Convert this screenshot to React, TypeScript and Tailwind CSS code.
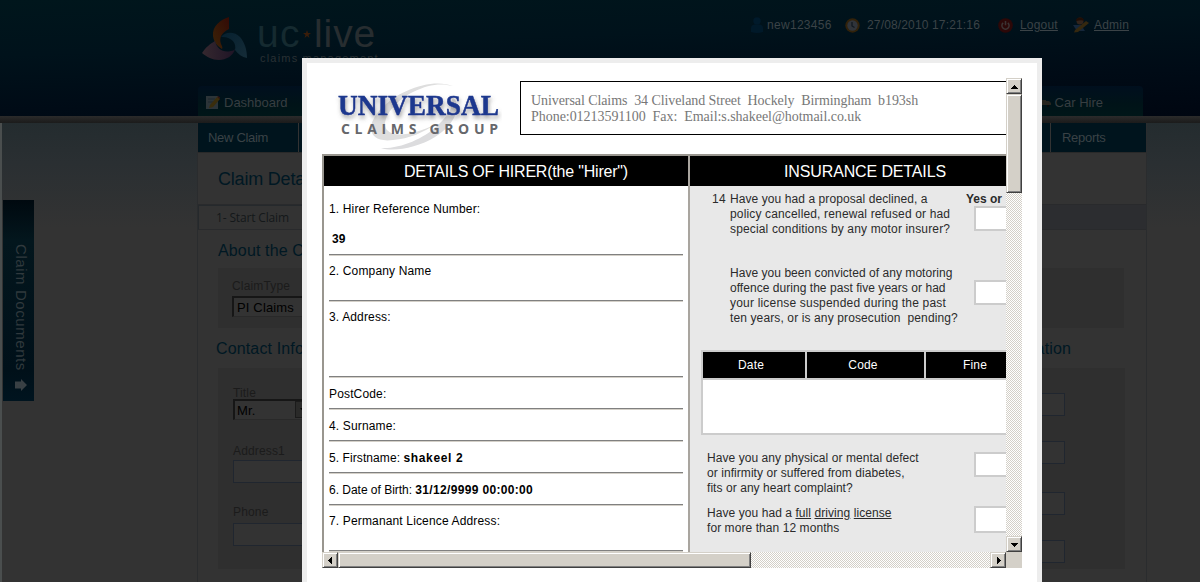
import type { ReactNode } from "react";

function BrandMark() {
  return (
    <svg className="mt-[17px] h-11 w-[46px] shrink-0" viewBox="0 0 46 44">
      <defs>
        <linearGradient id="flame" x1="0" y1="1" x2="1" y2="0">
          <stop offset="0" stopColor="#3b2408" />
          <stop offset="1" stopColor="#330a05" />
        </linearGradient>
        <linearGradient id="petal" x1="0" y1="0" x2="1" y2="0">
          <stop offset="0" stopColor="#35282f" />
          <stop offset="1" stopColor="#1f1426" />
        </linearGradient>
        <linearGradient id="wave" x1="0" y1="0" x2="1" y2="1">
          <stop offset="0" stopColor="#06202f" />
          <stop offset="1" stopColor="#152c38" />
        </linearGradient>
      </defs>
      <path d="M27 0C18 3 10 9 11 19c1 6 4 10 9 13 1-1 0-3-1-5-2-6 0-11 8-15z" fill="url(#flame)" />
      <path d="M0 36C4 30 8 27 13 24c2 8 8 12 16 10 2 0 3-1 4-2-2 7-9 11-16 11C10 43 5 40 0 36z" fill="url(#petal)" />
      <path d="M19 20c5-6 14-5 19 0 5 6 7 13 7 21-5-1-9-4-12-8 2-7-4-14-14-13z" fill="url(#wave)" />
    </svg>
  );
}

function UserIcon() {
  return (
    <svg className="h-4 w-3 shrink-0" viewBox="0 0 12 16">
      <circle cx="6" cy="4" r="3.7" fill="#001a2b" />
      <path d="M0 15V11Q0 7.500 4 7.500H8Q12 7.500 12 11V15Q6 17 0 15Z" fill="#001929" />
    </svg>
  );
}

function ClockIcon() {
  return (
    <svg className="h-[15px] w-[15px] shrink-0" viewBox="0 0 15 15">
      <circle cx="7.500" cy="7.500" r="7.200" fill="#32220a" />
      <circle cx="7.500" cy="7.500" r="5.200" fill="#30343a" />
      <path d="M7 4V8L9.500 9.500" stroke="#101820" strokeWidth="1.300" fill="none" />
    </svg>
  );
}

function PowerIcon() {
  return (
    <svg className="h-[15px] w-[15px] shrink-0" viewBox="0 0 15 15">
      <circle cx="7.500" cy="7.500" r="7.300" fill="#2c0808" />
      <path d="M5.200 4.800A3.600 3.600 0 1 0 9.800 4.800M7.500 3V7.200" stroke="#3c3434" strokeWidth="1.500" fill="none" />
    </svg>
  );
}

function AdminIcon() {
  return (
    <svg className="h-4 w-4 shrink-0" viewBox="0 0 16 16">
      <circle cx="7" cy="4" r="3.500" fill="#32241c" />
      <path d="M3 4Q3 .5 7 .5T11 4Q9 2.500 3 4Z" fill="#1f0d05" />
      <path d="M0 8H8L12 14H4Z" fill="#15263a" />
      <path d="M2 13L13 4L16 6L5 15L1 15.500Z" fill="#35280f" />
    </svg>
  );
}

function NoteIcon() {
  return (
    <svg className="h-4 w-4 shrink-0" viewBox="0 0 16 16">
      <path d="M1 1H13V14H1Z" fill="#2c3438" />
      <path d="M3 4H10M3 7H8" stroke="#1d272c" />
      <path d="M5 10L12 2L15 4L8 12L4 13Z" fill="#3a2d0c" />
      <path d="M12 2L13 1L15 2.500L15 4Z" fill="#351410" />
    </svg>
  );
}

function Logo() {
  return (
    <svg className="h-[72px] w-[172px] shrink-0" viewBox="0 0 172 72">
      <defs>
        <filter id="soft" x="-10%" y="-20%" width="120%" height="160%">
          <feDropShadow dx="1" dy="3" stdDeviation="2" floodColor="#555" floodOpacity="0.55" />
        </filter>
      </defs>
      <path d="M123 5C103-3 68 8 49 30C34 48 41 62 63 59C79 58 94 51 106 43C84 54 64 57 57 49C50 40 63 21 83 11C99 3 111 2 123 5Z" fill="#dedede" />
      <path d="M119 14C135 21 126 43 105 56C87 67 64 71 51 67C70 68 93 58 107 45C122 31 126 20 119 14Z" fill="#dcdcde" />
      <text x="8" y="34" textLength="161" lengthAdjust="spacingAndGlyphs" filter="url(#soft)" strokeWidth="0.5" className="fill-[#1b378e] stroke-[#1b378e] font-['Liberation_Serif'] text-[29px] font-bold">UNIVERSAL</text>
      <text x="11" y="53" textLength="157" className="fill-[#66676b] font-['Open_Sans'] text-[14px] font-bold">CLAIMS GROUP</text>
    </svg>
  );
}

function DarkInput({ className }: { className: string }) {
  return <div className={`border border-[#20262f] bg-[#333] ${className}`} />;
}

function Field({ className, children }: { className: string; children?: ReactNode }) {
  return (
    <div className={`shrink-0 whitespace-pre border-b border-[#808080] tracking-[0.15px] shadow-[0_1px_0_#d4d0c8] ${className}`}>
      {children}
    </div>
  );
}

function ScrollButton({ d }: { d: string }) {
  return (
    <div className="flex h-4 w-4 shrink-0 items-center justify-center border border-t-[#d4d0c8] border-r-[#404040] border-b-[#404040] border-l-[#d4d0c8] bg-[#d4d0c8] shadow-[inset_1px_1px_0_#fff,inset_-1px_-1px_0_#808080]">
      <svg className="h-[9px] w-[9px]" viewBox="0 0 9 9" shapeRendering="crispEdges">
        <path d={d} fill="#000" />
      </svg>
    </div>
  );
}

const thumb =
  "shrink-0 border border-t-[#d4d0c8] border-r-[#404040] border-b-[#404040] border-l-[#d4d0c8] bg-[#d4d0c8] shadow-[inset_1px_1px_0_#fff,inset_-1px_-1px_0_#808080]";
const track = "flex-1 bg-[repeating-conic-gradient(#d4d0c8_0_25%,#fff_0_50%)] bg-[length:2px_2px]";

function AnswerBox({ className }: { className: string }) {
  return <div className={`w-10 shrink-0 border-2 border-r-0 border-[#ccc] bg-white ${className}`} />;
}

function Backdrop() {
  return (
    <div className="flex h-full flex-col">
      <header className="flex h-[116px] shrink-0 flex-col bg-[linear-gradient(178deg,#00161c_0%,#00121b_35%,#000b16_70%,#000611_100%)]">
        <div className="flex h-[86px] items-start pl-[202px]">
          <BrandMark />
          <div className="ml-[9px] w-[131px] pt-[15px]">
            <div className="flex h-[37px] items-center text-[39px] leading-[38px] text-[#152a30]">
              <span className="tracking-[1.4px]">uc</span>
              <svg className="ml-[2px] mr-[3px] h-2 w-2" viewBox="0 0 8 8">
                <path d="M4 0L5 3H8L5.500 5L6.500 8L4 6L1.500 8L2.500 5L0 3H3Z" fill="#3a1d0a" />
              </svg>
              <span className="tracking-[0.9px] text-[#272d30]">live</span>
            </div>
            <div className="ml-[3px] whitespace-nowrap text-[11px] leading-3 tracking-[1.2px] text-[#293034]">claims management</div>
          </div>
          <div className="ml-[363px] mt-[17px] flex h-4 items-center whitespace-nowrap text-[12px] text-[#3b4347]">
            <UserIcon />
            <span className="ml-1 w-[78px] tracking-[0.3px]">new123456</span>
            <ClockIcon />
            <span className="ml-[7px] w-[131px] tracking-[0.15px]">27/08/2010 17:21:16</span>
            <PowerIcon />
            <span className="ml-[7px] w-[53px] tracking-[0.2px] underline underline-offset-1">Logout</span>
            <AdminIcon />
            <span className="ml-[5px] tracking-[0.2px] underline underline-offset-1">Admin</span>
          </div>
        </div>
        <nav className="ml-[198px] flex h-[30px] w-[945px] items-center justify-between rounded-t-[4px] bg-[linear-gradient(#000f1e,#001318_60%,#001618)] pl-[7px] pr-10 text-[13px] text-[#373e41]">
          <span className="flex items-center gap-[3px] pt-[3px]"><NoteIcon />Dashboard</span>
          <span className="flex items-center gap-[4px] pt-[3px]">
            <svg className="h-2 w-3" viewBox="0 0 12 8">
              <path d="M0 1H7V6H0ZM7 2H10L12 4V6H7Z" fill="#27251f" />
              <path d="M1 6H3V8H1ZM8 6H10V8H8Z" fill="#0a0c0c" />
            </svg>
            Car Hire
          </span>
        </nav>
      </header>
      <div className="h-[7px] shrink-0 bg-[linear-gradient(#2b2b2b,#1b1b1b)]" />
      <div className="flex min-h-0 flex-1 bg-[linear-gradient(#242c2f_0px,#2a2f32_40px,#333_105px)]">
        <div className="w-[197px] shrink-0 border-l-2 border-[#4a4e4e] pl-px pt-[77px]">
          <aside className="flex h-[201px] w-[31px] flex-col items-center bg-[linear-gradient(#00090f,#03161d_20%,#001019_85%,#00141f)] pl-[5px] pt-[44px]">
            <span className="h-[129px] text-[15px] leading-[18px] tracking-[0.57px] text-[#30393d] [writing-mode:vertical-rl]">Claim Documents</span>
            <svg className="mt-[6px] h-3 w-3 shrink-0" viewBox="0 0 12 12">
              <path d="M0 2.500H6V0L12 6L6 12V9.500H0Z" fill="#394044" />
            </svg>
          </aside>
        </div>
        <div className="flex w-[950px] shrink-0 flex-col border-x border-[#2a2c2e] bg-[#333]">
          <div className="flex h-[29px] shrink-0 items-center bg-[#00141d] text-[13px] text-[#3a4246]">
            <span className="flex h-full w-[101px] items-center border-r border-[#333] pl-[10px] tracking-[-0.3px]">New Claim</span>
            <span className="ml-auto flex h-full w-[96px] items-center border-l border-[#333] pl-[11px] tracking-[-0.3px]">Reports</span>
          </div>
          <div className="h-[52px] shrink-0 border-t border-[#292929] pl-5 pt-[13px] text-[18px] leading-[26px] tracking-[-0.2px] text-[#001823]">Claim Deta</div>
          <div className="flex h-[26px] shrink-0 items-end border-y border-[#292a2c] bg-[#2c2d30]">
            <span className="flex h-[24px] w-[120px] items-center border-l border-t border-[#25292c] bg-[#333] pl-[17px] font-['Open_Sans'] text-[12px] tracking-[-0.15px] text-[#14181a]">1- Start Claim</span>
          </div>
          <div className="h-[38px] shrink-0 pl-5 pt-[9px] text-[16px] leading-6 tracking-[0.14px] text-[#001823]">About the C</div>
          <div className="ml-5 mr-[22px] h-[60px] shrink-0 bg-[#2f2f2f] pl-[14px] pt-[11px] text-[12px] leading-[14px] tracking-[0.15px] text-[#1b1b1b]">
            <div>ClaimType</div>
            <div className="mt-[3px] h-[21px] w-[120px] border-2 border-b border-[#161616] border-b-[#292929] bg-[#333] pl-[3px] text-[13px] leading-[19px] text-[#000]">PI Claims</div>
          </div>
          <div className="flex h-[40px] shrink-0 justify-between pl-[18px] pr-[75px] pt-[9px] text-[16px] leading-6 tracking-[0.14px] text-[#001823]">
            <span>Contact Info</span>
            <span>ation</span>
          </div>
          <div className="ml-5 mr-[21px] flex h-[201px] shrink-0 justify-between bg-[#2f2f2f] pl-[15px] pr-[60px] text-[12px] leading-[14px] tracking-[0.15px] text-[#1b1b1b]">
            <div className="pt-[18px]">
              <div className="h-[13px]">Title</div>
              <div className="flex h-[21px] w-[82px] border-2 border-b border-[#161616] border-b-[#292929] bg-[#333] pl-[2px] text-[13px] leading-[19px] text-[#000]">
                <span className="w-[58px]">Mr.</span>
                <span className="flex h-[17px] w-4 items-center justify-center border border-[#1b1b1b] bg-[#2a2a29]">
                  <svg className="h-1 w-[7px]" viewBox="0 0 7 4"><path d="M0 0H7L3.500 4Z" fill="#000" /></svg>
                </span>
              </div>
              <div className="mt-[24px] h-4">Address1</div>
              <DarkInput className="h-[23px] w-[120px]" />
              <div className="mt-[22px] h-[18px]">Phone</div>
              <DarkInput className="h-[23px] w-[120px]" />
            </div>
            <div className="w-[80px] pt-[25px]">
              <DarkInput className="h-[23px]" />
              <DarkInput className="mt-[25px] h-[23px]" />
              <DarkInput className="mt-[28px] h-[23px]" />
              <DarkInput className="mt-[25px] h-[23px]" />
            </div>
          </div>
        </div>
      </div>
    </div>
  );
}

function HirerColumn() {
  return (
    <section className="w-[366px] shrink-0 border-r-2 border-[#a9a59f] bg-white">
      <h2 className="flex h-[30px] items-center justify-center bg-black pl-[20px] pt-[2px] text-[16px] tracking-[-0.2px] text-white">DETAILS OF HIRER(the "Hirer")</h2>
      <div className="flex flex-col pl-[5px] pr-[5px] text-[12px] leading-[14px] text-black">
        <Field className="h-[69px] pt-4">
          <div>1. Hirer Reference Number:</div>
          <div className="mt-4 pl-[3px] font-bold">39</div>
        </Field>
        <Field className="h-[46px] pt-[9px]">2. Company Name</Field>
        <Field className="h-[76px] pt-[9px]">3. Address:</Field>
        <Field className="h-[32px] pt-[10px]">PostCode:</Field>
        <Field className="h-[32px] pt-[10px]">4. Surname:</Field>
        <Field className="h-[32px] pt-[10px]"><span className="tracking-[0.08px]">5. Firstname: </span><b className="tracking-[0.65px]">shakeel 2</b></Field>
        <Field className="h-[32px] pt-[10px]"><span className="tracking-[-0.02px]">6. Date of Birth: </span><b className="tracking-[0.33px]">31/12/9999 00:00:00</b></Field>
        <Field className="h-[46px] pt-[9px]">7. Permanant Licence Address:</Field>
      </div>
    </section>
  );
}

function InsuranceColumn() {
  return (
    <section className="w-[350px] shrink-0 bg-[#e8e8e8] text-[12px] leading-[15px] text-[#2b2b2b]">
      <h2 className="flex h-[30px] items-center justify-center bg-black pt-px text-[16px] tracking-[-0.13px] text-white">INSURANCE DETAILS</h2>
      <div className="flex h-[74px] pl-[22px] pt-[6px]">
        <span className="w-[18px] tracking-[0.3px]">14</span>
        <p className="w-[236px] whitespace-pre tracking-[0.15px]"><span className="tracking-[0.08px]">Have you had a proposal declined, a</span>{"\npolicy cancelled, renewal refused or had\nspecial conditions by any motor insurer?"}</p>
        <div>
          <div className="font-bold">Yes or</div>
          <AnswerBox className="-mt-px ml-2 h-[25px]" />
        </div>
      </div>
      <div className="flex h-[90px] pl-10 pt-[6px]">
        <p className="w-[244px] whitespace-pre tracking-[0.04px]">
          {"Have you been convicted of any motoring\noffence during the past five years or had\n"}
          <span className="tracking-[0.19px]">your license suspended during the past</span>
          {"\n"}
          <span className="tracking-[0.12px]">{"ten years, or is any prosecution  pending?"}</span>
        </p>
        <AnswerBox className="mt-[14px] h-[25px]" />
      </div>
      <div className="ml-[11px] flex h-[85px] flex-col gap-[2px] overflow-hidden border-2 border-[#ccc] bg-[#ccc]">
        <div className="flex h-[26px] gap-[2px] text-center leading-[27px] tracking-[0.15px] text-white">
          <span className="w-[102px] shrink-0 bg-black pr-[6px]">Date</span>
          <span className="w-[117px] shrink-0 bg-black pr-[5px]">Code</span>
          <span className="w-[120px] shrink-0 bg-black pr-[22px]">Fine</span>
        </div>
        <div className="flex-1 bg-white" />
      </div>
      <div className="flex h-[71px] pl-[17px] pt-4">
        <p className="w-[267px] whitespace-pre tracking-[0.06px]">{"Have you any physical or mental defect\nor infirmity or suffered from diabetes,\nfits or any heart complaint?"}</p>
        <AnswerBox className="mt-px h-[25px]" />
      </div>
      <div className="flex h-[46px] pl-[17px]">
        <p className="w-[267px] whitespace-pre tracking-[0.07px]">
          Have you had a <u className="underline-offset-1">full</u> <u className="underline-offset-1">driving</u> <u className="underline-offset-1">license</u>
          {"\nfor more than 12 months"}
        </p>
        <AnswerBox className="h-[27px]" />
      </div>
    </section>
  );
}

function ReportDialog() {
  return (
    <div className="absolute left-[302px] top-[58px] flex h-[540px] w-[740px] border-[5px] border-[#ededed] bg-white pl-[15px] pt-[15px]">
      <div className="flex h-[490px] w-[700px] flex-col">
        <div className="flex h-[474px]">
          <div className="h-[474px] w-[684px] overflow-hidden bg-white">
            <div className="flex h-[76px] w-[900px] pl-2 pt-[3px]">
              <Logo />
              <div className="ml-[18px] h-[54px] w-[640px] whitespace-pre border border-black pl-[10px] pt-[11px] font-['Liberation_Serif'] text-[14px] leading-4 text-[#777]">
                <div className="tracking-[-0.08px]">{"Universal Claims  34 Cliveland Street  Hockely  Birmingham  b193sh"}</div>
                <div className="tracking-[-0.04px]">{"Phone:01213591100  Fax:  Email:s.shakeel@hotmail.co.uk"}</div>
              </div>
            </div>
            <div className="flex h-[398px] w-[718px] overflow-hidden border-l-2 border-t-2 border-[#99968f]">
              <HirerColumn />
              <InsuranceColumn />
            </div>
          </div>
          <div className="flex w-4 flex-col">
            <ScrollButton d="M4 3H5V4H6V5H7V6H8V7H1V6H2V5H3V4H4Z" />
            <div className={`h-[99px] w-4 ${thumb}`} />
            <div className={track} />
            <ScrollButton d="M1 3H8V4H7V5H6V6H5V7H4V6H3V5H2V4H1Z" />
          </div>
        </div>
        <div className="flex h-4">
          <ScrollButton d="M6 1V8H5V7H4V6H3V5H2V4H3V3H4V2H5V1Z" />
          <div className={`h-4 w-[413px] ${thumb}`} />
          <div className={track} />
          <ScrollButton d="M3 1V8H4V7H5V6H6V5H7V4H6V3H5V2H4V1Z" />
          <div className="w-4 bg-[#d4d0c8]" />
        </div>
      </div>
    </div>
  );
}

export default function App() {
  return (
    <div className="relative h-[582px] w-[1200px] overflow-hidden bg-[#333] font-['Liberation_Sans',Arial,sans-serif]">
      <Backdrop />
      <ReportDialog />
    </div>
  );
}
